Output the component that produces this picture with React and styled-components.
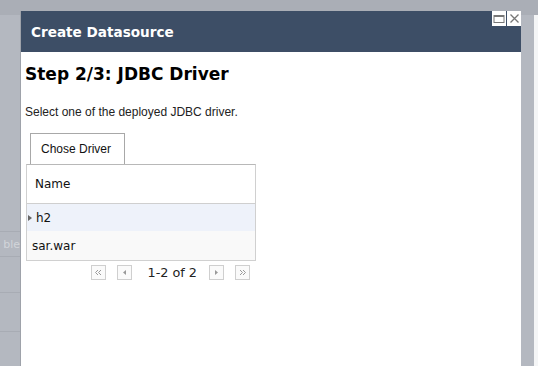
import React from "react";
import styled, { createGlobalStyle } from "styled-components";

const Global = createGlobalStyle`
  html, body { margin: 0; padding: 0; }
  body { background: #b4b8c0; overflow: hidden; font-family: "DejaVu Sans", sans-serif; }
`;

const Page = styled.div`
  position: relative;
  width: 538px;
  height: 366px;
  overflow: hidden;
  display: flex;
  flex-direction: column;
`;

const TopStrip = styled.div`
  height: 15px;
  background: #aaaeb6;
  flex-shrink: 0;
`;

const Backdrop = styled.div`
  flex: 1;
  display: flex;
  justify-content: space-between;
`;

const SideColumn = styled.div`
  width: 20px;
  padding-top: 216px;
  display: flex;
  flex-direction: column;
`;

const RightEdge = styled.div`
  width: 4px;
  background: #f4f5f6;
`;

const SideRow = styled.div`
  height: ${(p) => p.$h}px;
  border-top: 1px solid #a8acb4;
  font-family: "DejaVu Sans", sans-serif;
  font-size: 11px;
  color: #d2d5da;
  display: flex;
  align-items: center;
  justify-content: flex-end;
  overflow: hidden;
  white-space: nowrap;
`;

const Dialog = styled.div`
  position: absolute;
  left: 20px;
  top: 11px;
  width: 500px;
  height: 370px;
  background: #fff;
  border-left: 1px solid #9ea2aa;
  display: flex;
  flex-direction: column;
`;

const Header = styled.div`
  height: 41px;
  background: #3d4e66;
  display: flex;
  align-items: center;
  padding-left: 10px;
  flex-shrink: 0;
`;

const Title = styled.div`
  color: #fff;
  font-family: "DejaVu Sans", sans-serif;
  font-weight: bold;
  font-size: 13.6px;
`;

const WinButtons = styled.div`
  position: absolute;
  right: 0;
  top: 0;
  display: flex;
  gap: 1px;
`;

const WinButton = styled.div`
  width: 14px;
  height: 15px;
  background: #fff;
  display: flex;
  align-items: center;
  justify-content: center;
`;

const Body = styled.div`
  padding: 11px 4px 0 4px;
  display: flex;
  flex-direction: column;
`;

const StepTitle = styled.h1`
  margin: 0;
  font-family: "DejaVu Sans", sans-serif;
  font-weight: bold;
  font-size: 17px;
  color: #000;
  line-height: 22px;
`;

const Intro = styled.p`
  margin: 20px 0 0 0;
  font-family: "Liberation Sans", Arial, sans-serif;
  font-size: 12px;
  color: #222;
  line-height: 14px;
`;

const Tabs = styled.div`
  margin: 14px 0 0 5px;
  display: flex;
`;

const Tab = styled.div`
  width: 95px;
  height: 31px;
  border: 1px solid #a8a8a8;
  border-bottom: none;
  display: flex;
  align-items: center;
  padding-left: 10px;
  box-sizing: border-box;
  font-family: "Liberation Sans", Arial, sans-serif;
  font-size: 12px;
  color: #111;
  background: #fff;
`;

const Panel = styled.div`
  margin-left: 1px;
  width: 230px;
  box-sizing: border-box;
  border: 1px solid #d0d0d0;
  border-top: 1px solid #b8b8b8;
`;

const HeadRow = styled.div`
  height: 38px;
  display: flex;
  align-items: center;
  padding-left: 8px;
  border-bottom: 1px solid #cfcfcf;
  font-family: "DejaVu Sans", sans-serif;
  font-size: 12px;
  color: #111;
`;

const Row = styled.div`
  position: relative;
  height: ${(p) => p.$h}px;
  display: flex;
  align-items: center;
  padding-left: ${(p) => (p.$selected ? 9 : 5)}px;
  background: ${(p) => (p.$selected ? "#eef2fa" : "#f9f9f9")};
  font-family: "DejaVu Sans", sans-serif;
  font-size: 12px;
  color: #111;
`;

const Marker = styled.span`
  position: absolute;
  left: 1px;
  top: 50%;
  margin-top: -3px;
  width: 0;
  height: 0;
  border-top: 3px solid transparent;
  border-bottom: 3px solid transparent;
  border-left: 4px solid #666;
`;

const Pager = styled.div`
  width: 230px;
  margin-left: 1px;
  margin-top: 4px;
  display: flex;
  justify-content: flex-end;
  align-items: center;
  padding-right: 6px;
  box-sizing: border-box;
  gap: 11px;
`;

const PageBtn = styled.div`
  width: 13px;
  height: 13px;
  border: 1px solid #cfcfcf;
  display: flex;
  align-items: center;
  justify-content: center;
  background: #fafafa;
`;

const PageText = styled.span`
  font-family: "DejaVu Sans", sans-serif;
  font-size: 12.8px;
  color: #222;
  margin: 0 1px 0 4px;
`;

const Icon = ({ d, fill }) => (
  <svg width="9" height="9" viewBox="0 0 9 9">
    <path d={d} fill={fill ? "#999" : "none"} stroke={fill ? "none" : "#999"} strokeWidth="1" />
  </svg>
);

export default function App() {
  return (
    <Page>
      <Global />
      <TopStrip />
      <Backdrop>
        <SideColumn>
          <SideRow $h={24}>ble</SideRow>
          <SideRow $h={35} />
          <SideRow $h={38} />
          <SideRow $h={38} />
        </SideColumn>
        <RightEdge />
      </Backdrop>
      <Dialog>
        <Header>
          <Title>Create Datasource</Title>
        </Header>
        <WinButtons>
          <WinButton>
            <svg width="12" height="10" viewBox="0 0 12 10">
              <rect x="1" y="1.5" width="10" height="7" fill="none" stroke="#777" strokeWidth="1" />
              <rect x="1" y="1" width="10" height="2" fill="#777" />
            </svg>
          </WinButton>
          <WinButton>
            <svg width="11" height="11" viewBox="0 0 11 11">
              <path d="M1.5 1.5 L9.5 9.5 M9.5 1.5 L1.5 9.5" stroke="#777" strokeWidth="1.3" />
            </svg>
          </WinButton>
        </WinButtons>
        <Body>
          <StepTitle>Step 2/3: JDBC Driver</StepTitle>
          <Intro>Select one of the deployed JDBC driver.</Intro>
          <Tabs>
            <Tab>Chose Driver</Tab>
          </Tabs>
          <Panel>
            <HeadRow>Name</HeadRow>
            <Row $h={27} $selected>
              <Marker />
              h2
            </Row>
            <Row $h={29}>sar.war</Row>
          </Panel>
          <Pager>
            <PageBtn>
              <Icon d="M4 2 L1.5 4.5 L4 7 M7 2 L4.5 4.5 L7 7" />
            </PageBtn>
            <PageBtn>
              <Icon d="M6 2 L3 4.5 L6 7 Z" fill />
            </PageBtn>
            <PageText>1-2 of 2</PageText>
            <PageBtn>
              <Icon d="M3 2 L6 4.5 L3 7 Z" fill />
            </PageBtn>
            <PageBtn>
              <Icon d="M2 2 L4.5 4.5 L2 7 M5 2 L7.5 4.5 L5 7" />
            </PageBtn>
          </Pager>
        </Body>
      </Dialog>
    </Page>
  );
}
